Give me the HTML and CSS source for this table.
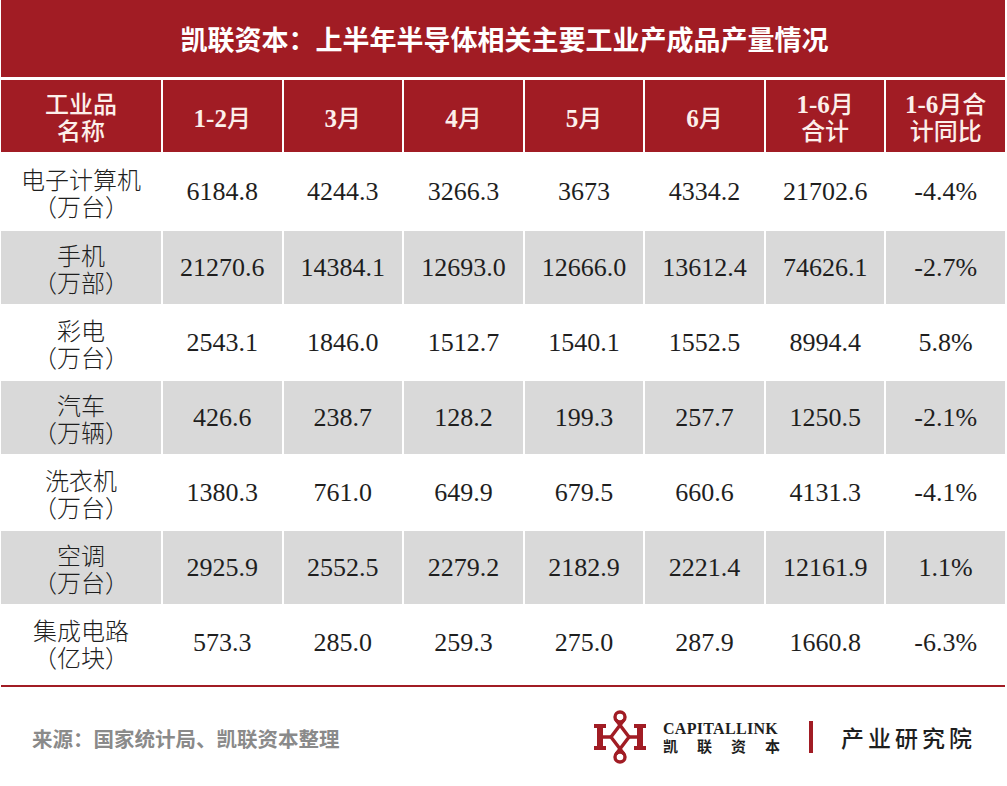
FILE: index.html
```html
<!DOCTYPE html>
<html lang="zh-CN">
<head>
<meta charset="utf-8">
<title>凯联资本：上半年半导体相关主要工业产成品产量情况</title>
<link rel="stylesheet" href="styles.css">
</head>
<body>
<div class="page">
  <div class="title">凯联资本：上半年半导体相关主要工业产成品产量情况</div>
  <div class="table">
    <div class="th"><span class="ln">工业品</span><span class="ln">名称</span></div>
    <div class="th"><span class="ln"><span class="n">1-2</span>月</span></div>
    <div class="th"><span class="ln"><span class="n">3</span>月</span></div>
    <div class="th"><span class="ln"><span class="n">4</span>月</span></div>
    <div class="th"><span class="ln"><span class="n">5</span>月</span></div>
    <div class="th"><span class="ln"><span class="n">6</span>月</span></div>
    <div class="th"><span class="ln"><span class="n">1-6</span>月</span><span class="ln">合计</span></div>
    <div class="th"><span class="ln"><span class="n">1-6</span>月合</span><span class="ln">计同比</span></div>

    <div class="td name first"><span class="ln">电子计算机</span><span class="ln">（万台）</span></div>
    <div class="td num first">6184.8</div><div class="td num first">4244.3</div><div class="td num first">3266.3</div><div class="td num first">3673</div><div class="td num first">4334.2</div><div class="td num first">21702.6</div><div class="td num first">-4.4%</div>

    <div class="td name alt"><span class="ln">手机</span><span class="ln">（万部）</span></div>
    <div class="td num alt">21270.6</div><div class="td num alt">14384.1</div><div class="td num alt">12693.0</div><div class="td num alt">12666.0</div><div class="td num alt">13612.4</div><div class="td num alt">74626.1</div><div class="td num alt">-2.7%</div>

    <div class="td name"><span class="ln">彩电</span><span class="ln">（万台）</span></div>
    <div class="td num">2543.1</div><div class="td num">1846.0</div><div class="td num">1512.7</div><div class="td num">1540.1</div><div class="td num">1552.5</div><div class="td num">8994.4</div><div class="td num">5.8%</div>

    <div class="td name alt"><span class="ln">汽车</span><span class="ln">（万辆）</span></div>
    <div class="td num alt">426.6</div><div class="td num alt">238.7</div><div class="td num alt">128.2</div><div class="td num alt">199.3</div><div class="td num alt">257.7</div><div class="td num alt">1250.5</div><div class="td num alt">-2.1%</div>

    <div class="td name"><span class="ln">洗衣机</span><span class="ln">（万台）</span></div>
    <div class="td num">1380.3</div><div class="td num">761.0</div><div class="td num">649.9</div><div class="td num">679.5</div><div class="td num">660.6</div><div class="td num">4131.3</div><div class="td num">-4.1%</div>

    <div class="td name alt"><span class="ln">空调</span><span class="ln">（万台）</span></div>
    <div class="td num alt">2925.9</div><div class="td num alt">2552.5</div><div class="td num alt">2279.2</div><div class="td num alt">2182.9</div><div class="td num alt">2221.4</div><div class="td num alt">12161.9</div><div class="td num alt">1.1%</div>

    <div class="td name"><span class="ln">集成电路</span><span class="ln">（亿块）</span></div>
    <div class="td num">573.3</div><div class="td num">285.0</div><div class="td num">259.3</div><div class="td num">275.0</div><div class="td num">287.9</div><div class="td num">1660.8</div><div class="td num">-6.3%</div>
  </div>
  <div class="rule"></div>
  <div class="footer">
    <div class="source">来源：国家统计局、凯联资本整理</div>
    <div class="brand">
      <svg class="logo" width="64" height="58" viewBox="0 0 64 58">
        <g fill="#a11c24">
          <rect x="5" y="17" width="6" height="24"/>
          <rect x="2" y="16" width="12" height="4"/>
          <rect x="2" y="38" width="12" height="4"/>
          <rect x="45" y="17" width="6" height="24"/>
          <rect x="42" y="16" width="12" height="4"/>
          <rect x="42" y="38" width="12" height="4"/>
        </g>
        <g fill="none" stroke="#a11c24" stroke-width="3.4" stroke-linecap="round">
          <line x1="11" y1="29" x2="19" y2="29"/>
          <line x1="37" y1="29" x2="45" y2="29"/>
          <circle cx="28" cy="9" r="5"/>
          <circle cx="28" cy="49" r="5"/>
          <path d="M24.5 12.5 L37 29 L24.5 45.5"/>
          <path d="M31.5 12.5 L19 29 L31.5 45.5"/>
        </g>
      </svg>
      <div class="brand-text">
        <div class="en">CAPITALLINK</div>
        <div class="cn"><span>凯</span><span>联</span><span>资</span><span>本</span></div>
      </div>
      <div class="divider"></div>
      <div class="inst">产业研究院</div>
    </div>
  </div>
</div>
</body>
</html>
```
FILE: styles.css
```css
html, body {
  margin: 0;
  padding: 0;
  background: #ffffff;
}
.page {
  width: 1004px;
  margin-left: 1px;
  font-family: "Noto Sans CJK SC", sans-serif;
}
.title {
  height: 77px;
  background: #a11c24;
  color: #ffffff;
  font-family: "Noto Sans CJK SC", sans-serif;
  font-weight: 700;
  font-size: 27px;
  display: flex;
  align-items: center;
  justify-content: center;
  padding-left: 3px;
}
.table {
  margin-top: 3px;
  display: grid;
  grid-template-columns: 160px repeat(7, 1fr);
  grid-template-rows: 72px 75px repeat(6, 73px);
  column-gap: 2px;
  row-gap: 2px;
}
.ln {
  display: block;
  height: 27px;
  line-height: 27px;
  white-space: nowrap;
}
.th {
  background: #a11c24;
  color: #fcefea;
  font-family: "Noto Sans CJK SC", sans-serif;
  font-size: 24px;
  font-weight: 500;
  display: flex;
  flex-direction: column;
  align-items: center;
  justify-content: center;
  text-align: center;
}
.th .n {
  font-family: "Liberation Serif", serif;
  font-weight: 700;
  font-size: 25px;
}
.td {
  background: #ffffff;
  color: #1e1e1e;
  display: flex;
  flex-direction: column;
  align-items: center;
  justify-content: center;
  text-align: center;
}
.td.alt {
  background: #d9d9d9;
}
.td.name {
  font-family: "Noto Sans CJK SC", sans-serif;
  font-weight: 300;
  font-size: 24px;
}
.td.num {
  font-family: "Liberation Serif", serif;
  font-size: 26px;
}
.rule {
  margin-top: 6px;
  height: 2px;
  background: #a11c24;
}
.footer {
  height: 99px;
  display: flex;
  align-items: center;
  padding-left: 31px;
  padding-right: 29px;
}
.source {
  color: #8a8a8a;
  font-weight: 700;
  font-size: 20.5px;
  margin-top: 2px;
}
.brand {
  margin-left: auto;
  display: flex;
  align-items: center;
}
.logo {
  display: block;
  margin-right: 7px;
}
.brand-text {
  width: 117px;
  display: flex;
  flex-direction: column;
  margin-top: 1px;
}
.en {
  font-family: "Liberation Serif", serif;
  font-weight: 700;
  font-size: 16px;
  line-height: 16px;
  letter-spacing: 0.3px;
  color: #1e1e1e;
}
.cn {
  display: flex;
  justify-content: space-between;
  font-size: 15px;
  line-height: 17px;
  font-weight: 700;
  color: #1e1e1e;
}
.divider {
  width: 4px;
  height: 32px;
  background: #a11c24;
  margin-left: 29px;
  margin-right: 28px;
}
.inst {
  font-size: 23px;
  letter-spacing: 4px;
  font-weight: 500;
  color: #1e1e1e;
}
```
